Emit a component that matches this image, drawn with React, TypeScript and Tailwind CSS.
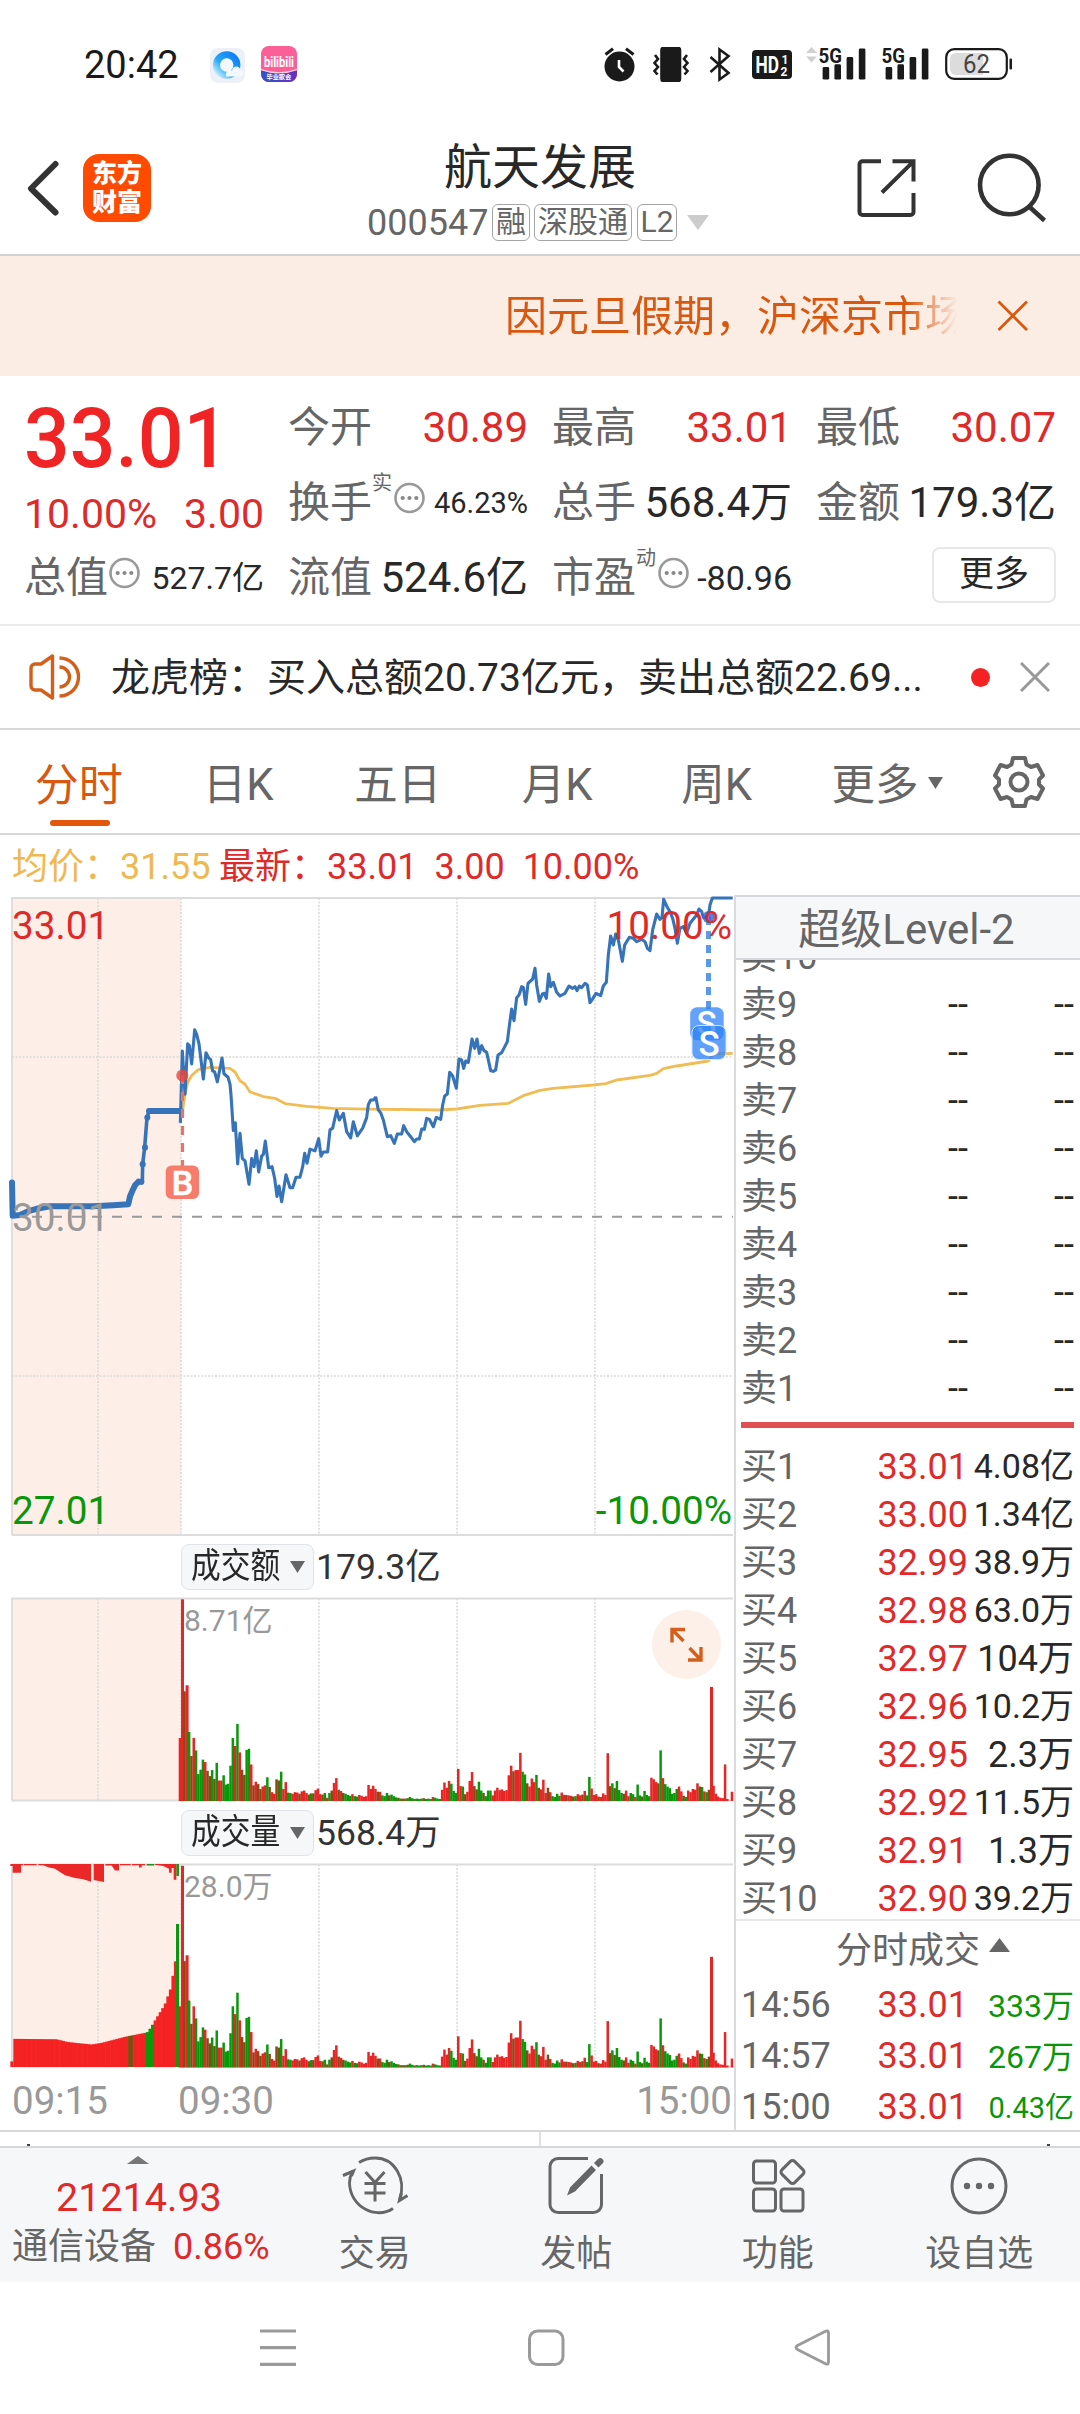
import React from "react";

const RED = "#e02a2a";
const GREEN = "#0a960a";

/* ---------- small shared pieces ---------- */

function Dots() {
  return (
    <svg width="31" height="32" viewBox="0 0 31 32" fill="none" className="shrink-0">
      <circle cx="15.5" cy="16" r="14" stroke="#999" strokeWidth="2.6" />
      <circle cx="8.7" cy="16" r="2.1" fill="#888" />
      <circle cx="15.5" cy="16" r="2.1" fill="#888" />
      <circle cx="22.3" cy="16" r="2.1" fill="#888" />
    </svg>
  );
}

function Signal() {
  return (
    <svg width="48" height="36" viewBox="-1 0 48 36" fill="#1a1a1a" className="shrink-0">
      <text x="-0.5" y="17" fontFamily="Roboto" fontWeight="700" fontSize="21" textLength="23.5" lengthAdjust="spacingAndGlyphs">5G</text>
      <rect x="3.6" y="21" width="6.6" height="12.6" rx="1.4" />
      <rect x="15.4" y="18.3" width="6.6" height="15.3" rx="1.4" />
      <rect x="27.6" y="11" width="6.6" height="22.6" rx="1.4" />
      <rect x="39.8" y="2.6" width="6.6" height="31" rx="1.4" />
    </svg>
  );
}

function StatusBar() {
  return (
    <div className="flex h-[128px] items-center pl-[84px] text-[#1a1a1a]">
      <span className="w-[126px] pt-[2px] text-[38px] leading-none">20:42</span>
      <svg width="35" height="35" viewBox="0 0 35 35" className="mt-[2px]">
        <defs>
          <linearGradient id="qq" x1="1" y1="0" x2="0" y2="1">
            <stop offset="0" stopColor="#0d7cf2" />
            <stop offset="0.6" stopColor="#27a9f6" />
            <stop offset="1" stopColor="#c9f1fd" />
          </linearGradient>
        </defs>
        <rect width="35" height="35" rx="8" fill="#edf1f7" />
        <circle cx="16.7" cy="17" r="10.2" fill="#f4f7fc" stroke="url(#qq)" strokeWidth="7" />
        <path d="M16 28.500c-1-7 5-7 6-6c1-5.500 8-5 8.500 0c4 .5 3 6 0 6z" fill="#f4f7fc" />
      </svg>
      <svg width="36" height="36" viewBox="0 0 36 36" className="ml-[16px]">
        <defs>
          <linearGradient id="bb" x1="0" y1="0" x2="1" y2="0">
            <stop offset="0" stopColor="#3056c8" />
            <stop offset="1" stopColor="#6a2cc4" />
          </linearGradient>
        </defs>
        <rect width="36" height="36" rx="8" fill="#fb5f97" />
        <path d="M0 24Q18 31 36 24V28a8 8 0 0 1-8 8H8a8 8 0 0 1-8-8z" fill="url(#bb)" />
        <path d="M0 23.500Q18 30 36 23.500" stroke="#ffd0e0" strokeWidth="1.200" fill="none" />
        <text x="3" y="21" fontFamily="Roboto" fontWeight="700" fontSize="15" fill="#fff" textLength="30" lengthAdjust="spacingAndGlyphs">bilibili</text>
        <text x="5.500" y="33" fontFamily="Noto Sans CJK SC" fontWeight="700" fontSize="6.200" fill="#fff">毕业歌会</text>
      </svg>
      <svg width="31" height="35" viewBox="0 0 31 35" className="ml-[307px]" fill="#1a1a1a">
        <circle cx="15.500" cy="19.500" r="15" />
        <path d="M1.500 7.500L9 1.800M29.500 7.500L22 1.800" stroke="#1a1a1a" strokeWidth="3" />
        <path d="M15 13v7l4.500 4.500" stroke="#fff" strokeWidth="2.600" fill="none" />
      </svg>
      <svg width="36" height="35" viewBox="0 0 36 35" className="ml-[18px]" fill="none" stroke="#1a1a1a" strokeWidth="2.600">
        <rect x="8.500" y="1" width="18.500" height="33" rx="2" fill="#1a1a1a" />
        <path d="M2 8l3 4-3.500 4 3.500 4-3.500 4 3 3.500M34 8l-3 4 3.500 4-3.500 4 3.500 4-3 3.500" />
      </svg>
      <svg width="22" height="35" viewBox="0 0 22 35" className="ml-[20px]" fill="none" stroke="#1a1a1a" strokeWidth="2.600">
        <path d="M1.500 10L19.500 26L10.500 32.500V2.500L19.500 9L1.500 25" />
      </svg>
      <svg width="40" height="29" viewBox="0 0 40 29" className="ml-[21px]">
        <rect width="40" height="29" rx="4" fill="#1a1a1a" />
        <text x="3.500" y="22.500" fontFamily="Roboto" fontWeight="700" fontSize="23" fill="#fff" textLength="23.500" lengthAdjust="spacingAndGlyphs">HD</text>
        <text x="29.500" y="14" fontFamily="Roboto" fontWeight="700" fontSize="12" fill="#fff">1</text>
        <text x="28.500" y="25.500" fontFamily="Roboto" fontWeight="700" fontSize="12" fill="#fff">2</text>
      </svg>
      <svg width="11" height="36" viewBox="0 0 11 36" className="ml-[14px]" fill="#d0d0d0">
        <path d="M0 7L5.500 1L11 7zM0 10.500L5.500 16.500L11 10.500z" />
      </svg>
      <div className="ml-[1px]"><Signal /></div>
      <div className="ml-[15px]"><Signal /></div>
      <svg width="68" height="32" viewBox="0 0 68 32" className="ml-[16px]">
        <rect x="1.200" y="1.200" width="60.600" height="29.600" rx="8" fill="none" stroke="#1a1a1a" strokeWidth="2.200" />
        <path d="M11 5H38V27H11a6 6 0 0 1-6-6V11a6 6 0 0 1 6-6z" fill="#dcdcdc" />
        <rect x="64.500" y="10.500" width="2.500" height="11" rx="1" fill="#1a1a1a" />
        <text x="31.500" y="25" textAnchor="middle" fontFamily="Roboto" fontSize="25" fill="#444" textLength="27" lengthAdjust="spacingAndGlyphs">62</text>
      </svg>
    </div>
  );
}

function Header() {
  return (
    <header className="flex h-[128px] border-b-2 border-[#d2d2d4]">
      <div className="flex w-[367px] gap-[24px] pt-[26px] pl-[27px]">
        <svg width="32" height="68" viewBox="0 0 32 68" fill="none" stroke="#333" strokeWidth="6" strokeLinecap="round" strokeLinejoin="round">
          <path d="M28.500 10L4 34.500L28.500 58.500" />
        </svg>
        <div className="flex h-[68px] w-[68px] flex-col items-center justify-center rounded-[16px] bg-[#ff4a02] text-[25px] leading-[29px] font-black text-white">
          <span>东方</span>
          <span>财富</span>
        </div>
      </div>
      <div className="w-[345px]">
        <h1 className="mt-[15px] ml-[1px] text-center text-[48px] leading-[50px] text-[#282828]">航天发展</h1>
        <div className="mt-[11px] flex h-[37px] items-center text-[30px] leading-[33px] text-[#666]">
          <span className="w-[125px] pt-px text-[36px]">000547</span>
          <span className="flex h-[37px] w-[38px] justify-center rounded-[6px] border-[1.500px] border-[#a5a5a5]">融</span>
          <span className="ml-[4px] flex h-[37px] w-[98px] justify-center rounded-[6px] border-[1.500px] border-[#a5a5a5]">深股通</span>
          <span className="ml-[5px] flex h-[37px] w-[40px] justify-center rounded-[6px] border-[1.500px] border-[#a5a5a5]">L2</span>
          <svg width="22" height="15" viewBox="0 0 22 15" className="ml-[10px] shrink-0" fill="#ccc"><path d="M0 0H22L11 15z" /></svg>
        </div>
      </div>
      <div className="flex flex-1 pl-[145px]">
        <svg width="60" height="62" viewBox="0 0 60 62" className="mt-[30px]" fill="none" stroke="#333" strokeWidth="4">
          <path d="M24 3.200H5.500a3 3 0 0 0-3 3V54a3 3 0 0 0 3 3H53.500a3 3 0 0 0 3-3V35M35.500 3.200H56.500V23.500M56 3.800L25 34.500" />
        </svg>
        <svg width="70" height="74" viewBox="0 0 70 74" className="mt-[24px] ml-[60px]" fill="none" stroke="#333" strokeWidth="4.600">
          <circle cx="32.300" cy="33" r="29.300" />
          <path d="M51.500 54L67.500 68.500" />
        </svg>
      </div>
    </header>
  );
}

function Notice() {
  return (
    <div className="flex h-[120px] items-center bg-[#fcede4] text-[#d9580f]">
      <div className="ml-[505px] w-[452px] overflow-hidden pt-[2px] text-[42px] leading-[60px] whitespace-nowrap [mask-image:linear-gradient(to_right,black_89%,transparent_100%)]">
        因元旦假期，沪深京市场
      </div>
      <svg width="32" height="32" viewBox="0 0 32 32" className="ml-[40px]" stroke="#d9580f" strokeWidth="2.800">
        <path d="M1.500 1.500L30 30M30 1.500L1.500 30" />
      </svg>
    </div>
  );
}

/* ---------- quote summary ---------- */

function Cell({ label, children }: { label: React.ReactNode; children: React.ReactNode }) {
  return (
    <div className="flex h-[75px] items-center justify-between whitespace-nowrap">
      <span className="flex items-center text-[#666]">{label}</span>
      {children}
    </div>
  );
}

function Quote() {
  return (
    <section className="flex h-[250px] gap-[24px] border-b-2 border-[#ededed] px-[24px] pt-[14px] text-[42px] leading-[50px] text-[#282828]">
      <div className="w-[240px]">
        <div className="flex h-[98px] items-center">
          <span className="origin-left scale-y-[1.040] text-[80.500px] leading-none font-medium text-[#f02424]">33.01</span>
        </div>
        <div className="flex h-[52px] items-center justify-between text-[41px] text-[#e02a2a]">
          <span>10.00%</span>
          <span>3.00</span>
        </div>
        <Cell label={<>总值<span className="-mt-[9px] ml-[1px]"><Dots /></span></>}>
          <span className="text-[32px]">527.7亿</span>
        </Cell>
      </div>
      <div className="w-[240px]">
        <Cell label="今开"><span className="text-[#e02a2a]">30.89</span></Cell>
        <Cell label={<>换手<span className="-mt-[40px] text-[20px]">实</span><span className="-mt-[9px] ml-[2px]"><Dots /></span></>}>
          <span className="text-[29px]">46.23%</span>
        </Cell>
        <Cell label="流值"><span>524.6亿</span></Cell>
      </div>
      <div className="w-[240px]">
        <Cell label="最高"><span className="text-[#e02a2a]">33.01</span></Cell>
        <Cell label="总手"><span>568.4万</span></Cell>
        <Cell label={<>市盈<span className="-mt-[40px] text-[20px]">动</span><span className="-mt-[9px] ml-[2px]"><Dots /></span></>}>
          <span className="text-[34px]">-80.96</span>
        </Cell>
      </div>
      <div className="w-[240px]">
        <Cell label="最低"><span className="text-[#e02a2a]">30.07</span></Cell>
        <Cell label="金额"><span>179.3亿</span></Cell>
        <div className="flex h-[69px] items-center justify-end">
          <button className="h-[56px] w-[124px] rounded-[8px] border-2 border-[#e8e8e8] text-[35px] leading-[52px]">更多</button>
        </div>
      </div>
    </section>
  );
}

function News() {
  return (
    <div className="flex h-[104px] items-center border-b-2 border-[#d8d8d8] pl-[29px]">
      <svg width="52" height="46" viewBox="0 0 52 46" fill="none" stroke="#d2601c" strokeWidth="3.400" strokeLinejoin="round">
        <path d="M23.500 2V44L12 36H6a4 4 0 0 1-4-4V14a4 4 0 0 1 4-4h6z" />
        <path d="M30.500 13a10 10 0 0 1 0 20M30.500 4a19 19 0 0 1 0 38" />
      </svg>
      <span className="ml-[30px] w-[860px] pt-[2px] text-[39px] leading-[50px] whitespace-nowrap text-[#282828]">
        龙虎榜：买入总额20.73亿元，卖出总额22.69...
      </span>
      <span className="h-[19px] w-[19px] rounded-full bg-[#f42222]" />
      <svg width="30" height="30" viewBox="0 0 30 30" className="ml-[30px]" stroke="#999" strokeWidth="3">
        <path d="M1 1L29 29M29 1L1 29" />
      </svg>
    </div>
  );
}

function Tabs() {
  const items = ["分时", "日K", "五日", "月K", "周K"];
  return (
    <nav className="flex h-[105px] items-start border-b-2 border-[#d8d8d8] text-[43.500px] leading-[50px] text-[#666]">
      {items.map((t, i) => (
        <div key={t} className="flex w-[159.500px] flex-col items-center pt-[31px]">
          <span className={i === 0 ? "-ml-[2px] text-[44px] text-[#d9580f]" : "-ml-[2px]"}>{t}</span>
          {i === 0 && <span className="mt-[9px] h-[6px] w-[60px] rounded-full bg-[#e2570a]" />}
        </div>
      ))}
      <div className="flex w-[146px] items-center pt-[31px] pl-[34px] whitespace-nowrap">
        更多
        <svg width="15" height="12" viewBox="0 0 15 12" className="-mt-[6px] ml-[9px] shrink-0" fill="#666"><path d="M0 0H15L7.500 12z" /></svg>
      </div>
      <svg width="52" height="54" viewBox="0 0 52 54" className="mt-[25px] ml-[49px]" fill="none" stroke="#666" strokeWidth="4" strokeLinejoin="round">
        <path d="M20 3H32L33.500 9.500L38 12L44.500 10L50 20.500L46 24.500V29.500L50 33.500L44.500 44L38 42L33.500 44.500L32 51H20L18.500 44.500L14 42L7.500 44L2 33.500L6 29.500V24.500L2 20.500L7.500 10L14 12L18.500 9.500z" />
        <circle cx="26" cy="27" r="8.500" />
      </svg>
    </nav>
  );
}

/* ---------- charts ---------- */

const GRID_X = [98, 181, 319, 457, 595];

function Grid({ top, bottom, rows = [] }: { top: number; bottom: number; rows?: number[] }) {
  return (
    <g>
      <rect x="12" y={top} width="169" height={bottom - top} fill="#fdeee7" />
      <g stroke="#d9d9d9" strokeWidth="1.500" strokeDasharray="2 1.500">
        {GRID_X.map((x) => <path key={x} d={`M${x} ${top}V${bottom}`} />)}
        {rows.map((y) => <path key={y} d={`M12 ${y}H733`} />)}
      </g>
      <path d={`M12 ${bottom}V${top}H733M12 ${bottom}H733`} stroke="#dcdcdc" strokeWidth="1.800" fill="none" />
    </g>
  );
}

function PriceChart() {
  return (
    <svg width="735" height="645" viewBox="0 895 735 645" fill="none" fontFamily="Roboto" fontSize="38.700" className="block">
      <Grid top={898} bottom={1535} rows={[1057, 1376]} />
      <path d="M12 1216.700H733" stroke="#999" strokeWidth="2" strokeDasharray="10 10" />
      <g strokeLinejoin="round">
        <g transform="translate(0 730) scale(.33333 .35075)">
          <polyline vectorEffect="non-scaling-stroke" stroke="#efbc55" strokeWidth="2.800" points="547,1090 555,1040 563,1005 575,985 595,968 630,962 690,965 705,975 720,1000 735,1010 750,1032 790,1045 825,1050 855,1065 920,1073 1000,1079 1100,1081 1200,1082" />
          <polyline vectorEffect="non-scaling-stroke" stroke="#3673b9" strokeWidth="6" strokeLinecap="round" points="36,1290 38,1385 60,1383 85,1372 110,1365 150,1358 280,1358 340,1355 385,1352 390,1330 398,1312 405,1298 415,1288" />
          <polyline vectorEffect="non-scaling-stroke" stroke="#3673b9" strokeWidth="3.600" points="415,1288 427,1288 428,1238 434,1190 441,1105 447,1086" />
          <polyline vectorEffect="non-scaling-stroke" stroke="#3673b9" strokeWidth="6" strokeLinecap="round" points="447,1086 541,1086" />
          <g fill="#3673b9">
            <circle cx="428" cy="1238" r="9" /><circle cx="435" cy="1190" r="9" /><circle cx="442" cy="1105" r="9" />
            <circle cx="424" cy="1288" r="9" />
          </g>
          <polyline vectorEffect="non-scaling-stroke" stroke="#3673b9" strokeWidth="3.100" points="541,1120 547,915 555,1038 563,895 568,900 575,952 584,855 590,868 597,895 610,995 618,920 626,935 632,940 638,972 644,975 652,1003 660,965 666,935 672,980 684,990 690,1010 693,1040 700,1142 706,1120 713,1237 720,1150 727,1222 735,1228 747,1295 755,1222 762,1245 769,1200 776,1260 785,1215 790,1210 796,1172 806,1248 816,1245 824,1278 831,1330 837,1300 845,1345 858,1268 870,1305 878,1305 888,1275 900,1275 908,1245 914,1207 921,1235 930,1195 945,1200 956,1165 963,1215 970,1203 983,1203 990,1140 998,1135 1010,1085 1018,1112 1030,1093 1040,1145 1052,1163 1060,1117 1072,1157 1088,1135 1100,1105 1105,1068 1112,1055 1120,1055 1128,1046" />
        </g>
        <g transform="translate(340 830) scale(.33333)">
          <polyline vectorEffect="non-scaling-stroke" stroke="#efbc55" strokeWidth="2.800" points="180,838 300,840 350,837 420,826 505,820 550,797 600,781 640,775 760,765 797,761 830,750 930,736 950,730 970,716 1010,708 1105,693 1120,672 1178,670" />
          <polyline vectorEffect="non-scaling-stroke" stroke="#3673b9" strokeWidth="3.100" points="107,800 115,840 122,848 130,870 142,920 152,917 163,940 172,912 185,912 191,887 200,905 212,920 223,935 230,927 238,927 245,897 253,898 260,865 268,868 280,890 289,862 302,868 308,825 314,798 322,792 329,727 338,738 349,775 357,687 365,690 371,715 377,693 385,697 396,627 404,655 411,627 418,670 425,647 432,662 440,667 452,722 460,724 467,720 474,675 485,668 502,635 509,580 515,537 522,572 530,503 537,495 545,470 550,472 557,523 564,460 578,447 585,415 590,465 598,514 607,492 613,490 619,505 626,432 632,470 640,457 650,487 660,498 675,490 687,468 698,475 705,470 711,482 718,468 725,473 735,460 742,465 750,518 757,508 768,490 782,497 790,468 799,457 805,375 812,318 820,345 827,312 835,330 847,394 854,345 868,322 880,325 890,335 905,328 915,335 922,355 930,362 938,300 950,252 960,268 966,262 971,208 980,228 990,245 998,265 1005,295 1012,340 1020,295 1030,290 1040,310 1050,280 1062,265 1070,255 1077,237 1085,245 1090,262 1105,262 1110,225 1117,204 1178,204" />
        </g>
      </g>

      {/* buy marker */}
      <path d="M182.500 1075V1166" stroke="#e4756b" strokeWidth="3.200" strokeDasharray="9 8" />
      <circle cx="182.300" cy="1075.500" r="6" fill="#e8473d" fillOpacity=".8" />
      <rect x="165.700" y="1165.600" width="33.300" height="33.400" rx="6" fill="#f87c6c" />
      <text x="182.600" y="1194.500" textAnchor="middle" fontSize="34" fontWeight="500" fill="#fff" stroke="#fff" strokeWidth=".6">B</text>

      {/* sell markers */}
      <path d="M708.500 917V1012" stroke="#5a98ea" strokeWidth="5" strokeDasharray="8 6" strokeDashoffset="-14" />
      <circle cx="708.500" cy="917" r="6" fill="#2f6fe0" fillOpacity=".85" />
      <rect x="690.200" y="1007.300" width="33.500" height="33" rx="7" fill="#2d82f8" fillOpacity=".74" />
      <text x="706.500" y="1034.500" textAnchor="middle" fontSize="33" fontWeight="500" fill="#fff">S</text>
      <rect x="692" y="1025.500" width="34" height="34" rx="7" fill="#2d82f8" fillOpacity=".76" stroke="#cfe2fd" strokeWidth="1" />
      <text x="709" y="1055.500" textAnchor="middle" fontSize="35" fontWeight="500" fill="#fff">S</text>

      <text x="12" y="939" fill={RED}>33.01</text>
      <text x="732" y="939" fill={RED} textAnchor="end">10.00%</text>
      <text x="12" y="1231" fill="#999">30.01</text>
      <text x="12" y="1524" fill={GREEN}>27.01</text>
      <text x="732" y="1524" fill={GREEN} textAnchor="end">-10.00%</text>
    </svg>
  );
}

/* One entry per minute: bar height followed by its colour (r, g, or o where both overlap). */
const BARS =
  "157r 502r 273o 288r 172g 112o 157r 126g 67g 78g 103g 97r 75o 62o 77g 55o 95g 51r 51r 64g 41g 43g 88g 157g 137r 192g 121r 78o 65o 127g 130g 91r 39o 48r 42o 30o 36r 39r 59g 35o 22r 18r 54o 51o 73g 30r 47r 21g 20g 18r 22r 21r 18o 24r 26r 20r 16o 19g 19o 27r 31r 17r 16o 20g 8r 20g 26o 45r 57r 28o 25r 20o 18g 15g 13g 17r 12g 11g 15r 13r 10r 12r 40r 30r 38r 30r 23o 23r 14g 12g 20g 14o 16g 12g 9g 8o 6g 6r 6g 7o 10g 7g 5o 6g 5g 6g 7o 5g 6g 5g 10r 8g 6g 5g 28r 46r 33r 50r 43g 25g 20g 80r 37r 36g 17o 23r 50r 72r 37o 29o 48g 26g 20o 12g 26g 26g 14r 26r 33r 27r 29r 25r 27r 64r 88r 74o 77r 77r 120r 73g 66g 44o 36r 56r 47r 65g 33o 29r 53r 20r 33o 22r 12g 10g 18g 13g 21r 15r 15o 14r 13r 11o 12g 17r 14r 16o 25r 14g 60g 31r 15r 17r 11o 10r 19r 15r 119r 37o 44g 32o 50g 27g 20g 18o 26r 12r 20g 17g 10r 41g 14g 11o 25g 15g 12g 58r 54r 47r 44o 126g 57r 42g 36g 32g 18g 20g 30g 36r 24r 13o 10g 26r 22r 30r 28r 44r 36o 35g 24r 22g 28o 284r 38r 18r 11r 8r 7r 91r 5r 0r 23r".split(" ");

const FILL: Record<string, string> = { r: "#e82525", g: "#0a970a", o: "#7d4f14" };

function Bars({ bottom, scale }: { bottom: number; scale: number }) {
  return (
    <g>
      {BARS.map((b, i) => {
        const raw = parseInt(b, 10);
        const h = (raw > 400 ? raw : raw * scale) / 2.489;
        return <rect key={i} x={178.700 + i * 2.3} y={bottom - h} width={raw > 280 ? 3 : 2.5} height={h} fill={FILL[b.slice(-1)]} />;
      })}
    </g>
  );
}

function AmountChart() {
  return (
    <svg width="735" height="212" viewBox="0 1593 735 212" fill="none" className="block">
      <Grid top={1598.5} bottom={1800.5} />
      <Bars bottom={1801} scale={1} />
      <text x="184" y="1631" fontFamily="Roboto, 'Noto Sans CJK SC', sans-serif" fontSize="30" fill="#999">8.71亿</text>
      <circle cx="686.500" cy="1644.500" r="34.500" fill="#fdf0e9" />
      <path d="M672 1642.500V1629.500H685M672 1629.500L683.500 1641M701 1647V1660H688M701 1660L689.500 1648" stroke="#d2601c" strokeWidth="3.400" />
    </svg>
  );
}

const AUCTION: [number, number][] = [[36, 14], [40, 70], [165, 69], [200, 62], [270, 56], [300, 60], [375, 76], [437, 86], [448, 98], [460, 115], [475, 135], [490, 155], [500, 178], [508, 196], [514, 225], [520, 262], [528, 266]];

function heightAt(x: number) {
  for (let i = 1; i < AUCTION.length; i++) {
    const [x1, h1] = AUCTION[i];
    const [x0, h0] = AUCTION[i - 1];
    if (x <= x1) return h0 + ((x - x0) / (x1 - x0)) * (h1 - h0);
  }
  return 266;
}

function VolumeChart() {
  const cols = Array.from({ length: 64 }, (_, i) => 40 + i * 7.65);
  return (
    <svg width="735" height="210" viewBox="0 1860 735 210" fill="none" className="block">
      <Grid top={1864.5} bottom={2066.5} />
      <g transform="translate(0 2067) scale(.33333 -.40177)">
        <rect x="31" y="0" width="9" height="14" fill="#f42222" />
        {cols.map((x) => (
          <rect key={x} x={x} y="0" width="9.500" height={heightAt(x)} fill={x > 437 && x < 458 ? "#0a970a" : x > 380 && x < 392 ? "#7d4f14" : "#f42222"} />
        ))}
        <rect x="528" y="0" width="9" height="356" fill="#0a970a" />
      </g>
      <g transform="translate(0 1864) scale(.33333 .40177)" fill="#ea2828">
        <path d="M31 0H70V3H63V22H38V5H31zM72 0H110V3H72zM115 0H273V44L250 38L225 35L195 28L180 20L165 12L145 8L130 3H115zM281 0H312V45L281 40zM316 0H357V16H345L335 4H316zM360 0H392V3H360zM395 0H435V3H425V9H417V3H395zM465 0H529V39H521V10H515V22H507V12L490 5L465 2z" />
        <path d="M440 0H463V4H440zM529 0H537V30H529z" fill="#2a8a1c" />
      </g>
      <Bars bottom={2067.5} scale={0.97} />
      <text x="184" y="1897" fontFamily="Roboto, 'Noto Sans CJK SC', sans-serif" fontSize="30" fill="#999">28.0万</text>
    </svg>
  );
}

function Indicator({ name, value }: { name: string; value: string }) {
  return (
    <>
      <span className="flex h-[46px] w-[133px] items-center rounded-[8px] border border-[#e0e3e7] bg-[#f6f7f9] pl-[9px] text-[35px] leading-[44px] text-[#282828]">
        <span className="w-[88px] whitespace-nowrap"><span className="inline-block origin-left scale-x-[0.850]">{name}</span></span>
        <svg width="15" height="12" viewBox="0 0 15 12" className="ml-[11px] shrink-0" fill="#666"><path d="M0 0H15L7.500 12z" /></svg>
      </span>
      <span className="ml-[2px] text-[35.500px] leading-[44px] text-[#333]">{value}</span>
    </>
  );
}

function Charts() {
  return (
    <div className="w-[734px] overflow-hidden">
      <PriceChart />
      <div className="flex h-[53px] items-center pl-[181px]"><Indicator name="成交额" value="179.3亿" /></div>
      <AmountChart />
      <div className="flex h-[55px] items-center pl-[181px]"><Indicator name="成交量" value="568.4万" /></div>
      <VolumeChart />
      <div className="flex h-[60px] items-center pt-[2px] pl-[12px] text-[38.500px] leading-none text-[#999]">
        <span className="w-[166px]">09:15</span>
        <span>09:30</span>
        <span className="ml-auto pr-[2px]">15:00</span>
      </div>
    </div>
  );
}

/* ---------- order book ---------- */

const BIDS: [string, string][] = [
  ["33.01", "4.08亿"], ["33.00", "1.34亿"], ["32.99", "38.9万"], ["32.98", "63.0万"], ["32.97", "104万"],
  ["32.96", "10.2万"], ["32.95", "2.3万"], ["32.92", "11.5万"], ["32.91", "1.3万"], ["32.90", "39.2万"],
];
const TRADES: [string, string][] = [["14:56", "333万"], ["14:57", "267万"], ["15:00", "0.43亿"]];

function OrderBook() {
  return (
    <aside className="flex flex-1 flex-col border-l-2 border-[#d9dbde] text-[36px] leading-[48px] text-[#666]">
      <div className="z-10 h-[65px] shrink-0 border-y-2 border-[#d5d9dd] bg-[#f6f7f9] pr-[3px] text-center text-[42px] leading-[65px]">超级Level-2</div>
      <div className="flex h-[462px] shrink-0 flex-col justify-end overflow-hidden pr-[6px] pb-[9px] pl-[5px]">
        {[10, 9, 8, 7, 6, 5, 4, 3, 2, 1].map((n) => (
          <div key={n} className="flex h-[48px] shrink-0">
            <span className="w-[120px]">卖{n}</span>
            <span className="w-[107px] text-right text-[#282828]">{n === 10 ? "" : "--"}</span>
            <span className="flex-1 text-right text-[#282828]">{n === 10 ? "" : "--"}</span>
          </div>
        ))}
      </div>
      <div className="mr-[6px] ml-[5px] h-[6px] shrink-0 bg-[#e05050]" />
      <div className="h-[493px] shrink-0 border-b-2 border-[#e8e8e8] pt-[15px] pr-[6px] pl-[5px]">
        {BIDS.map(([p, v], i) => (
          <div key={p} className="flex h-[48px] whitespace-nowrap">
            <span className="w-[120px]">买{i + 1}</span>
            <span className="w-[107px] text-right text-[#e02a2a]">{p}</span>
            <span className={v.length > 4 ? "flex-1 text-right text-[34px] leading-[46px] text-[#282828]" : "flex-1 text-right text-[#282828]"}>{v}</span>
          </div>
        ))}
      </div>
      <div className="flex h-[58px] shrink-0 items-center pt-[2px] pl-[100px]">
        分时成交
        <svg width="21" height="14" viewBox="0 0 21 14" className="-mt-[12px] ml-[9px]" fill="#666"><path d="M0 14H21L10.500 0z" /></svg>
      </div>
      <div className="h-[144px] shrink-0 pr-[6px] pl-[5px]">
        {TRADES.map(([t, v]) => (
          <div key={t} className="flex h-[51px] items-center whitespace-nowrap">
            <span className="w-[120px]">{t}</span>
            <span className="w-[107px] text-right text-[#e02a2a]">33.01</span>
            <span className={v.length > 4 ? "flex-1 pt-[3px] text-right text-[29px] text-[#0a960a]" : "flex-1 pt-[2px] text-right text-[32px] text-[#0a960a]"}>{v}</span>
          </div>
        ))}
      </div>
    </aside>
  );
}

/* ---------- bottom ---------- */

const S = { width: 66, height: 62, fill: "none", stroke: "#666", strokeWidth: 3 };

function BottomBar() {
  const actions = [
    {
      name: "交易",
      icon: (
        <svg {...S} viewBox="0 0 66 62">
          <path d="M17 7.500Q24 3 33 3C52 3 65 23 57.500 45M51 53.500C34 65 8 52 7.500 28Q7.500 22 10.500 16" strokeWidth="2.800" />
          <path d="M1 20.500L11.500 16L9.500 21M65.500 40.500L57.500 45.500L59.500 38" />
          <path d="M23.500 17L33 27.500L42.500 17M33 27.500V46.500M22.500 28.500H43.500M22.500 38H43.500" />
        </svg>
      ),
    },
    {
      name: "发帖",
      icon: (
        <svg {...S} viewBox="0 0 66 62">
          <path d="M45 3.500H15a8 8 0 0 0-8 8V49.500a8 8 0 0 0 8 8H50.500a8 8 0 0 0 8-8V19" />
          <path d="M48.500 10.500L53 15L32 36.500L24 40.500L27 32.500zM51 8L55 4a3 3 0 0 1 4.500 4.500L55.500 12.500z" fill="#666" stroke="none" />
        </svg>
      ),
    },
    {
      name: "功能",
      icon: (
        <svg {...S} viewBox="0 0 66 62">
          <rect x="8.500" y="6" width="22" height="22" rx="3" />
          <rect x="8.500" y="34" width="22" height="22" rx="3" />
          <rect x="36" y="34" width="22" height="22" rx="3" />
          <rect x="38.500" y="8" width="18" height="18" rx="3" transform="rotate(45 47.500 17)" />
        </svg>
      ),
    },
    {
      name: "设自选",
      icon: (
        <svg {...S} viewBox="0 0 66 62">
          <circle cx="33" cy="31" r="27" />
          <g fill="#666" stroke="none"><circle cx="21" cy="31" r="3.200" /><circle cx="33" cy="31" r="3.200" /><circle cx="45" cy="31" r="3.200" /></g>
        </svg>
      ),
    },
  ];
  return (
    <footer className="flex h-[136px] border-t-2 border-[#d5d7da] bg-[#f6f7f9] text-[36px] text-[#666]">
      <div className="flex w-[274px] flex-col pl-[12px]">
        <svg width="22" height="8" viewBox="0 0 22 8" className="mt-[8px] ml-[115px]" fill="#777"><path d="M0 8L11 0L22 8z" /></svg>
        <span className="mt-[12px] ml-[44px] text-[39.500px] leading-[44px] text-[#e02a2a]">21214.93</span>
        <span className="mt-[3px] flex leading-[48px] whitespace-nowrap">通信设备<span className="ml-[17px] text-[#e02a2a]">0.86%</span></span>
      </div>
      {actions.map((a) => (
        <div key={a.name} className="flex w-[201.500px] flex-col items-center pt-[7px]">
          {a.icon}
          <span className="mt-[13px] leading-[48px]">{a.name}</span>
        </div>
      ))}
    </footer>
  );
}

function SystemNav() {
  return (
    <div className="flex h-[132px] items-start pt-[46px] pl-[259px]">
      <svg width="38" height="40" viewBox="0 0 38 40" stroke="#9a9a9a" strokeWidth="3.200"><path d="M1 3H37M1 19.700H37M1 36.300H37" /></svg>
      <svg width="38" height="40" viewBox="0 0 38 40" className="ml-[230px]" fill="none" stroke="#9a9a9a" strokeWidth="3"><rect x="2.500" y="3" width="33.500" height="33.500" rx="8" /></svg>
      <svg width="38" height="40" viewBox="0 0 38 40" className="ml-[229px]" fill="none" stroke="#9a9a9a" strokeWidth="2.800" strokeLinejoin="round"><path d="M31 3.500Q34.500 1.500 34.500 5V34Q34.500 37.500 31 35.500L3.500 21.500Q0.500 19.500 3.500 17.500z" /></svg>
    </div>
  );
}

export default function App() {
  return (
    <div className="h-[2414px] w-[1080px] overflow-hidden bg-white font-[Roboto,'Noto_Sans_CJK_SC',sans-serif]">
      <StatusBar />
      <Header />
      <Notice />
      <Quote />
      <News />
      <Tabs />
      <div className="flex h-[60px] items-center pt-[4px] pl-[12px] text-[36px] leading-[50px] whitespace-nowrap text-[#e02a2a]">
        <span className="w-[207px] text-[#efb850]">均价：31.55</span>
        <span>最新：33.01</span>
        <span className="ml-[17px]">3.00</span>
        <span className="ml-[18px]">10.00%</span>
      </div>
      <main className="flex h-[1235px]">
        <Charts />
        <OrderBook />
      </main>
      <div className="flex h-[16px] border-t-2 border-[#d8d8d8]">
        <div className="flex w-[541px] items-end border-r-2 border-[#e0e0e0] pl-[27px]"><span className="h-[2px] w-[3px] bg-[#444]" /></div>
        <div className="flex flex-1 items-end pl-[506px]"><span className="h-[2px] w-[3px] bg-[#444]" /></div>
      </div>
      <BottomBar />
      <SystemNav />
    </div>
  );
}
